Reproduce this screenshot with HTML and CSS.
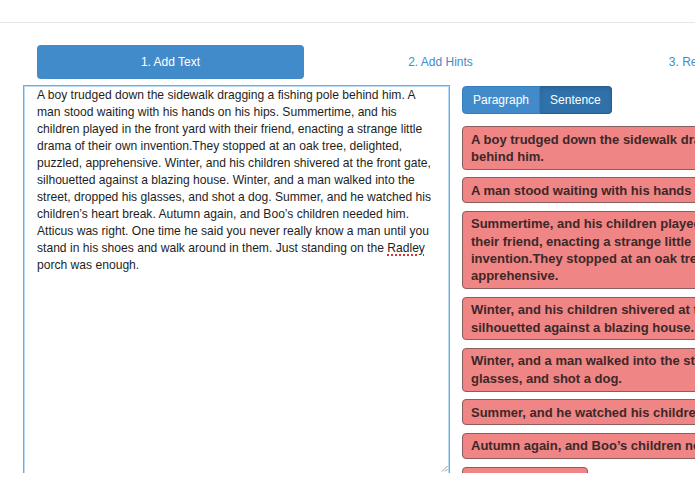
FILE: index.html
```html
<!DOCTYPE html>
<html lang="en">
<head>
<meta charset="utf-8">
<title>Add Text</title>
<link rel="stylesheet" href="styles.css">
</head>
<body>
<div class="topbar"></div>
<ul class="steps">
  <li class="step active">1. Add Text</li>
  <li class="step">2. Add Hints</li>
  <li class="step">3. Review Hints</li>
</ul>
<div class="workspace">
  <div class="editor">
    <div class="editor-text">A boy trudged down the sidewalk dragging a fishing pole behind him. A man stood waiting with his hands on his hips. Summertime, and his children played in the front yard with their friend, enacting a strange little drama of their own invention.They stopped at an oak tree, delighted, puzzled, apprehensive. Winter, and his children shivered at the front gate, silhouetted against a blazing house. Winter, and a man walked into the street, dropped his glasses, and shot a dog. Summer, and he watched his children’s heart break. Autumn again, and Boo’s children needed him. Atticus was right. One time he said you never really know a man until you stand in his shoes and walk around in them. Just standing on the <span class="misspelled">Radley</span> porch was enough.</div>
    <svg class="grip" width="7" height="7" viewBox="0 0 7 7"><path d="M6.5 1 L1 6.5 M6.5 4 L4 6.5" stroke="#9a9a9a" stroke-width="1" fill="none"/></svg>
  </div>
  <div class="sidebar">
    <div class="btn-group">
      <button class="btn">Paragraph</button>
      <button class="btn active">Sentence</button>
    </div>
    <div class="cards">
      <div class="card">A boy trudged down the sidewalk dragging a fishing pole behind him.</div>
      <div class="card">A man stood waiting with his hands on his hips.</div>
      <div class="card">Summertime, and his children played in the front yard with their friend, enacting a strange little drama of their own invention.They stopped at an oak tree, delighted, puzzled, apprehensive.</div>
      <div class="card">Winter, and his children shivered at the front gate, silhouetted against a blazing house.</div>
      <div class="card">Winter, and a man walked into the street, dropped his glasses, and shot a dog.</div>
      <div class="card">Summer, and he watched his children’s heart break.</div>
      <div class="card">Autumn again, and Boo’s children needed him.</div>
      <div class="card">Atticus was right.</div>
      <div class="card">One time he said you never really know a man until you stand in his shoes and walk around in them.</div>
    </div>
  </div>
</div>
</body>
</html>
```

FILE: styles.css
```css
html, body {
  margin: 0;
  padding: 0;
  overflow: hidden;
  background: #fff;
  width: 695px;
  height: 494px;
}
body {
  font-family: "Liberation Sans", Arial, sans-serif;
  font-size: 12px;
  color: #222;
}
.topbar {
  height: 22px;
  border-bottom: 1px solid #e6e6e6;
}
.steps {
  list-style: none;
  display: flex;
  gap: 3px;
  margin: 22px 0 6px 37px;
  padding: 0;
}
.step {
  flex: none;
  width: 267px;
  height: 34px;
  display: flex;
  align-items: center;
  justify-content: center;
  border-radius: 4px;
  color: #428bca;
  font-size: 12px;
}
.step.active {
  background: #428bca;
  color: #fff;
}
.workspace {
  display: flex;
  align-items: flex-start;
  gap: 12px;
  margin-left: 23px;
  height: 388px;
  overflow: hidden;
}
.editor {
  position: relative;
  flex: none;
  width: 427px;
  height: 390px;
  box-sizing: border-box;
  border: 1px solid #66afe9;
  box-shadow: inset 0 0 0 1px rgba(102, 175, 233, 0.45);
  padding: 1px 13px;
  background: #fff;
}
.editor-text {
  font-size: 12.1px;
  line-height: 17px;
  color: #1e1e1e;
}
.misspelled {
  text-decoration: underline dotted #e0302a;
  text-decoration-thickness: 2px;
  text-underline-offset: 2px;
}
.grip {
  position: absolute;
  right: 1px;
  bottom: 2px;
}
.sidebar {
  flex: none;
  width: 392px;
  padding-top: 1px;
}
.btn-group {
  display: flex;
}
.btn {
  font-family: "Liberation Sans", Arial, sans-serif;
  font-size: 12px;
  line-height: 16px;
  padding: 5px 10px;
  color: #fff;
  background: #428bca;
  border: 1px solid #357ebd;
  margin: 0;
  border-radius: 4px 0 0 4px;
}
.btn.active {
  background: #3071a9;
  border-color: #285e8e;
  border-left: none;
  border-radius: 0 4px 4px 0;
  box-shadow: inset 0 2px 4px rgba(0, 0, 0, 0.1);
}
.cards {
  display: flex;
  flex-direction: column;
  align-items: flex-start;
  gap: 7.5px;
  margin-top: 12px;
}
.card {
  max-width: 392px;
  box-sizing: border-box;
  padding: 3.5px 8px;
  border: 1px solid #8a5e5e;
  border-radius: 4px;
  background: #ef8585;
  color: #3d2828;
  font-size: 13px;
  font-weight: bold;
  line-height: 17.33px;
}
```
